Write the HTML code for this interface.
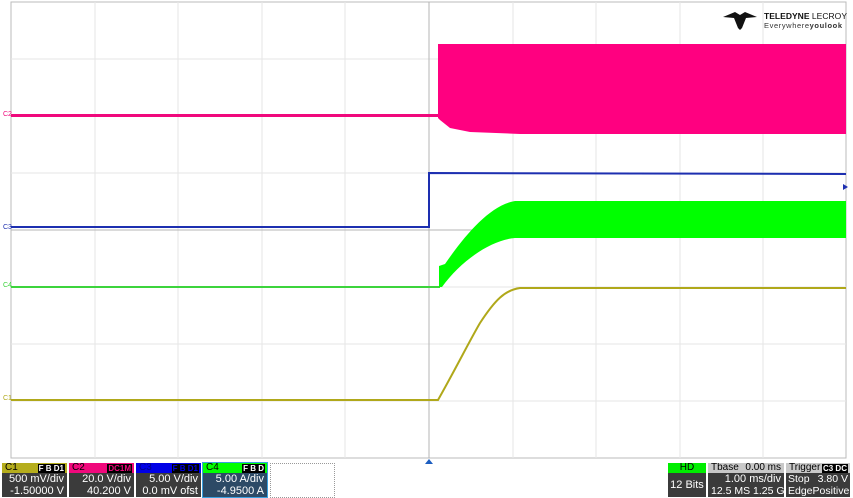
<!DOCTYPE html>
<html><head><meta charset="utf-8"><style>
body{margin:0;background:#fff;width:853px;height:498px;overflow:hidden;font-family:"Liberation Sans",sans-serif}
svg{position:absolute;left:0;top:0}
.box{position:absolute;top:463px;height:34px;background:#3b3b3b;color:#fff;font-size:11px;line-height:12px;white-space:nowrap;overflow:hidden}
.hd{height:10px;line-height:10px;padding-left:3px;font-size:10px;position:relative}
.r{text-align:right;padding-right:3px}
.f{display:flex;justify-content:space-between;padding:0 2px;font-size:10.5px}
.tg{position:absolute;top:1px;height:9px;background:#000;color:#fff;font-size:8px;line-height:9px;padding:0 1px;font-weight:bold}
</style></head><body>
<svg width="853" height="498" viewBox="0 0 853 498">
<rect x="11" y="2" width="835" height="456" fill="#fff" stroke="#bbb"/>
<g stroke="#e6e6e6" stroke-width="1">
<line x1="95" y1="2" x2="95" y2="458"/><line x1="178" y1="2" x2="178" y2="458"/><line x1="262" y1="2" x2="262" y2="458"/><line x1="345" y1="2" x2="345" y2="458"/><line x1="513" y1="2" x2="513" y2="458"/><line x1="596" y1="2" x2="596" y2="458"/><line x1="680" y1="2" x2="680" y2="458"/><line x1="763" y1="2" x2="763" y2="458"/>
<line x1="11" y1="59" x2="846" y2="59"/><line x1="11" y1="116" x2="846" y2="116"/><line x1="11" y1="173" x2="846" y2="173"/><line x1="11" y1="287" x2="846" y2="287"/><line x1="11" y1="344" x2="846" y2="344"/><line x1="11" y1="401" x2="846" y2="401"/>
</g>
<line x1="429" y1="2" x2="429" y2="458" stroke="#b5b5b5"/>
<line x1="11" y1="230" x2="846" y2="230" stroke="#b5b5b5"/>
<line x1="11" y1="115.5" x2="439" y2="115.5" stroke="#f0087c" stroke-width="3"/>
<path d="M438 44 L846 44 L846 134 L520 134 L470 132 L450 128 L440 120 L438 118Z" fill="#ff0080"/>
<path d="M11 227 L429 227 L429 173 L846 174" fill="none" stroke="#1d2fb0" stroke-width="2"/>
<path d="M848 187 l-5 -3 v6z" fill="#1d2fb0"/>
<line x1="11" y1="287" x2="440" y2="287" stroke="#3cd43c" stroke-width="2"/>
<path d="M439 287 L439 266 L445 264 C465 235 490 205 515 201 L846 201 L846 238 L515 238 C490 240 460 262 442 287Z" fill="#00ff00"/>
<path d="M11 400 L438 400 C455 370 470 340 480 323 C495 300 505 290 520 288 L846 288" fill="none" stroke="#b0a81a" stroke-width="2"/>
<path d="M429 459 l-4 5 h8z" fill="#1d5ec0"/>
<g font-size="7" font-family="Liberation Sans">
<text x="3" y="116" fill="#f0087c">C2</text><text x="3" y="229" fill="#1d2fb0">C3</text><text x="3" y="287" fill="#3cd43c">C4</text><text x="3" y="400" fill="#b0a81a">C1</text>
</g>
<path d="M723 17 L735 12 L740 15 L745 12 L757 17 L746 18 L742 28 L740 30 L738 28 L734 18Z" fill="#111"/>
<text x="764" y="19" font-size="8.5" font-weight="bold" fill="#111" textLength="83">TELEDYNE <tspan font-weight="normal">LECROY</tspan></text>
<text x="764" y="28" font-size="7.5" fill="#333" textLength="78">Everywhere<tspan font-weight="bold">youlook</tspan></text>
</svg>
<div class="box" style="left:2px;width:65px"><div class="hd" style="background:#b5ad1c;color:#000">C1<span class="tg" style="right:2px">F B D1</span></div><div class="r">500 mV/div</div><div class="r">-1.50000 V</div></div>
<div class="box" style="left:69px;width:65px"><div class="hd" style="background:#f0087c;color:#000">C2<span class="tg" style="right:2px;color:#f0087c">DC1M</span></div><div class="r">20.0 V/div</div><div class="r">40.200 V</div></div>
<div class="box" style="left:136px;width:65px"><div class="hd" style="background:#0000e6;color:#00008a">C3<span class="tg" style="right:2px;color:#0000e6">F B D1</span></div><div class="r">5.00 V/div</div><div class="r">0.0 mV ofst</div></div>
<div class="box" style="left:202px;width:64px;background:#2d4a66;border:1px solid #3aa0e0;top:462px"><div class="hd" style="background:#00ff00;color:#000">C4<span class="tg" style="right:2px">F B D</span></div><div class="r">5.00 A/div</div><div class="r">-4.9500 A</div></div>
<div style="position:absolute;left:270px;top:463px;width:63px;height:33px;border:1px dotted #999"></div>
<div class="box" style="left:668px;width:38px"><div class="hd" style="background:#00ee00;color:#000;text-align:center;padding:0">HD</div><div style="text-align:center;line-height:24px">12 Bits</div></div>
<div class="box" style="left:708px;width:76px"><div class="hd" style="background:#c8c8c8;color:#000">Tbase<span style="position:absolute;right:3px">0.00 ms</span></div><div class="r">1.00 ms/div</div><div style="padding-left:3px;font-size:10.5px">12.5 MS 1.25 G...</div></div>
<div class="box" style="left:786px;width:64px"><div class="hd" style="background:#c8c8c8;color:#000">Trigger<span class="tg" style="right:2px">C3 DC</span></div><div class="f"><span>Stop</span><span>3.80 V</span></div><div class="f"><span>Edge</span><span>Positive</span></div></div>
</body></html>
